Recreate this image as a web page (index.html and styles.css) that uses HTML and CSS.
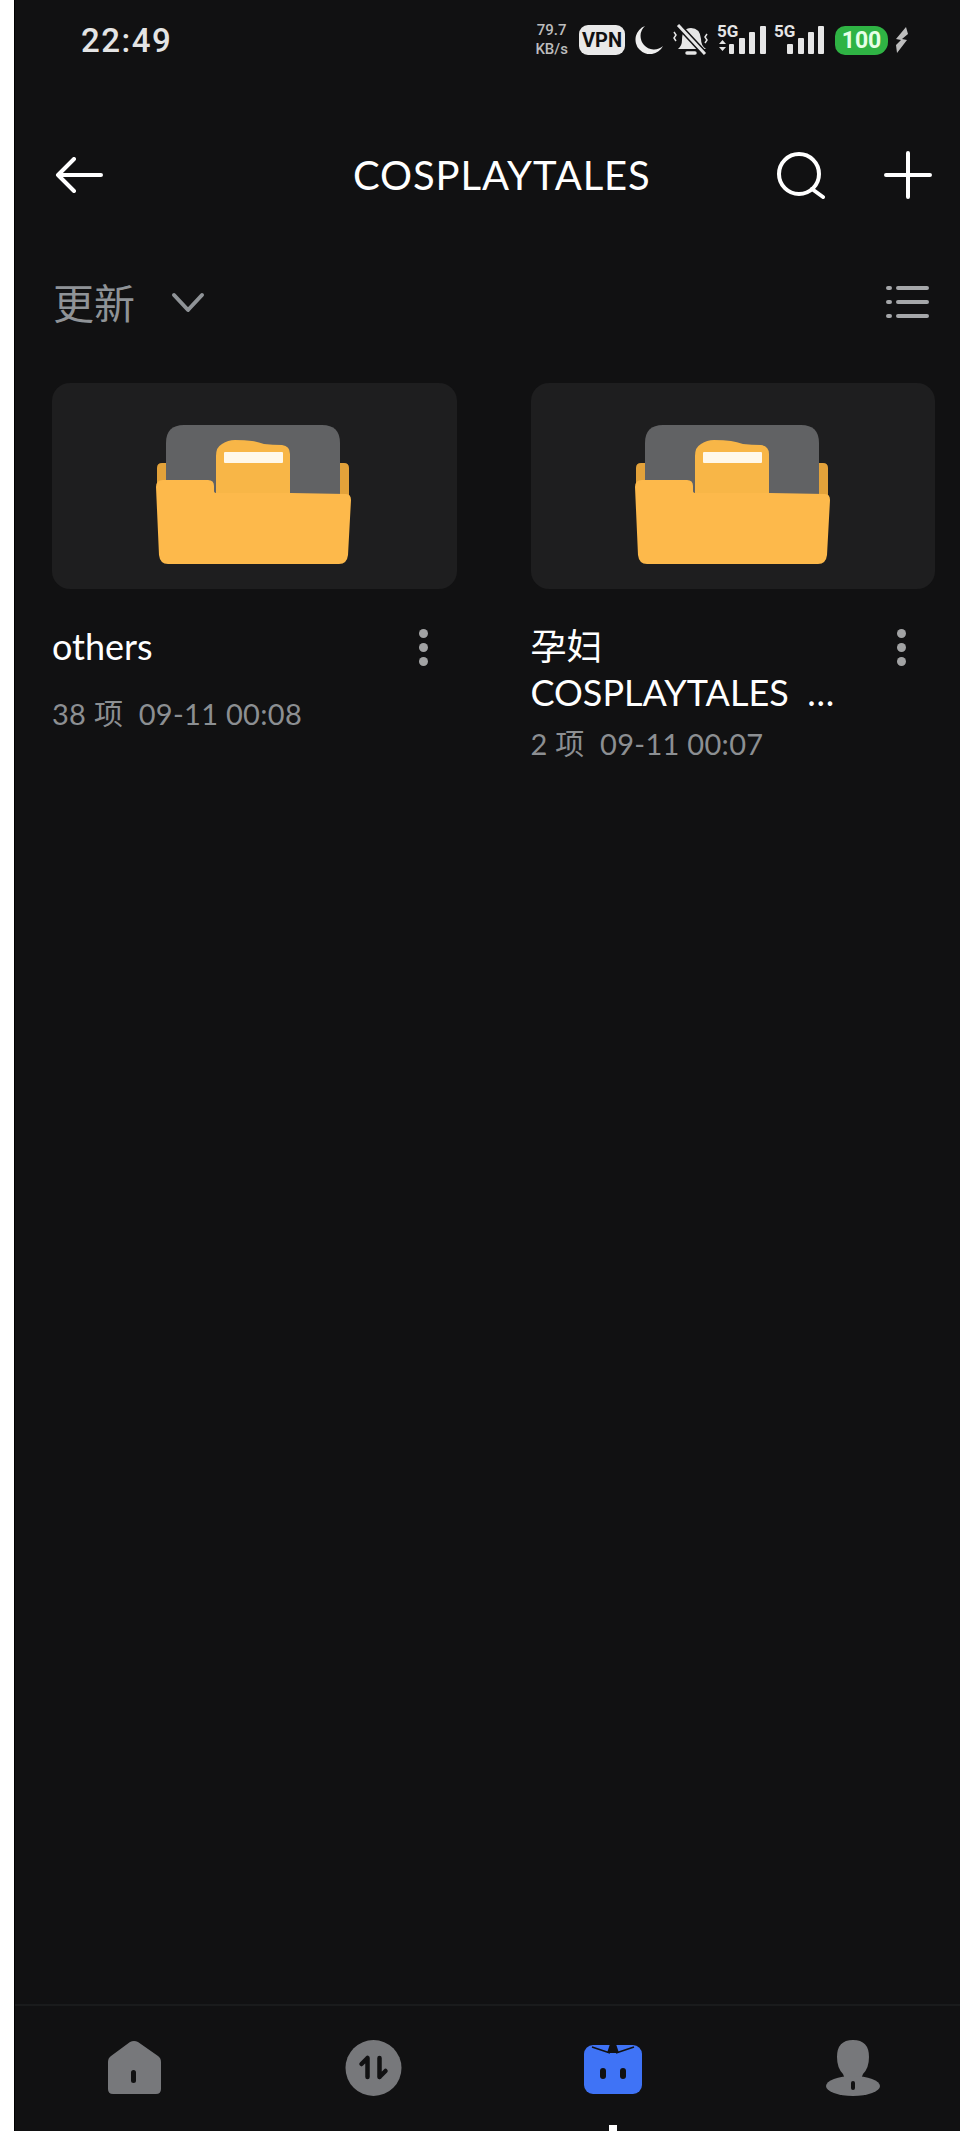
FILE: index.html
```html
<!DOCTYPE html>
<html lang="zh-CN">

<head>
    <meta charset="UTF-8">
    <meta name="viewport" content="width=device-width, initial-scale=1.0">
    <title>COSPLAYTALES</title>
    <link rel="stylesheet" href="styles.css">
</head>

<body>

    <!-- Shared folder drawing -->
    <svg class="defs" width="0" height="0" aria-hidden="true">
        <symbol id="folder" viewBox="0 0 210 150">
            <path d="M13 43h8v30H8V48q0-5 5-5zM186 43h9q5 0 5 5v30h-14z" fill="#e3a23a" />
            <path d="M35 5h138q18 0 18 18v72H17V23q0-18 18-18z" fill="#616264" />
            <path d="M67 80V36q0-9 6-12 6-4 13-4 10 0 17 1 6 1 12 3 9 1 18 1 8 1 8 9v46z" fill="#f8b647" />
            <rect x="75" y="32" width="59" height="11" rx="1" fill="#fff8ea" />
            <path d="M14 60h45q6 0 6 6v5q0 2 3 2h74l55 1q5 0 5 6l-3 55q-1 9-9 9H19q-8 0-9-9L7 67q0-7 7-7z" fill="#fdb94b" />
        </symbol>
    </svg>

    <div class="phone">

        <!-- Status Bar -->
        <div class="status-bar">
            <span class="clock">22:49</span>
            <div class="status-icons">
                <div class="speed">
                    <p>79.7</p>
                    <p>KB/s</p>
                </div>
                <div class="vpn">VPN</div>
                <svg width="30" height="30" viewBox="0 0 30 30">
                    <path d="M12 1A14.500 14.500 0 1 0 30 21 13 13 0 0 1 12 1z" fill="#eee" />
                </svg>
                <svg width="38" height="32" viewBox="0 0 38 32" fill="none" stroke="#e6e6e6">
                    <path d="M7 25q4-3 4-9 0-12 9-12 9 0 10 11 0 7 5 10z" fill="#e6e6e6" stroke="none" />
                    <path d="M16 29h8" stroke-width="3.500" stroke-linecap="round" />
                    <path d="M7 1l27 29" stroke="#111112" stroke-width="6" />
                    <path d="M7 1l27 29" stroke-width="3" />
                    <path d="M3 8l2 3-2 3 2 3M36 10l-2 3 2 3-2 3" stroke-width="1.500" />
                </svg>
                <svg class="signal" width="49" height="38" viewBox="0 -6 49 38" fill="#e6e6e6">
                    <text x="0" y="13" class="net-label">5G</text>
                    <path d="M2 20l3.500-4 3.500 4zM2 23l3.500 4 3.500-4z" />
                    <rect x="12" y="20" width="5" height="10" rx="1" />
                    <rect x="22" y="14" width="6" height="16" rx="1" />
                    <rect x="32" y="8" width="6" height="22" rx="1" />
                    <rect x="43" y="2" width="6" height="28" rx="1" />
                </svg>
                <svg class="signal" width="50" height="38" viewBox="0 -6 50 38" fill="#e6e6e6">
                    <text x="0" y="13" class="net-label">5G</text>
                    <rect x="13" y="20" width="6" height="10" rx="1" />
                    <rect x="24" y="14" width="6" height="16" rx="1" />
                    <rect x="34" y="8" width="6" height="22" rx="1" />
                    <rect x="44" y="2" width="6" height="28" rx="1" />
                </svg>
                <span class="battery">100</span>
                <svg class="bolt" width="14" height="26" viewBox="0 0 14 26">
                    <path d="M11 0L1 12l5 1-5 5 1 8 10-13-5-1 6-5z" fill="#bdbdbd" />
                </svg>
            </div>
        </div>

        <!-- Top Bar -->
        <div class="top-bar">
            <svg width="48" height="36" viewBox="0 0 48 36" fill="none" stroke="#fff" stroke-width="4" stroke-linecap="round" stroke-linejoin="round">
                <path d="M19 2L3 18l16 16M3 18h43" />
            </svg>
            <h1>COSPLAYTALES</h1>
            <div class="top-actions">
                <svg width="50" height="48" viewBox="0 0 50 48" fill="none" stroke="#fff" stroke-width="4" stroke-linecap="round">
                    <circle cx="23" cy="23" r="20" />
                    <path d="M36 38l11 8" />
                </svg>
                <svg width="48" height="48" viewBox="0 0 48 48" fill="none" stroke="#fff" stroke-width="4" stroke-linecap="round">
                    <path d="M24 2v44M2 24h44" />
                </svg>
            </div>
        </div>

        <!-- Sort Row -->
        <div class="sort-row">
            <div class="sort-label">
                <span>更新</span>
                <svg width="34" height="22" viewBox="0 0 34 22" fill="none" stroke="#8f9397" stroke-width="4" stroke-linecap="round" stroke-linejoin="round">
                    <path d="M3 3l14 15L31 3" />
                </svg>
            </div>
            <svg width="46" height="36" viewBox="0 0 46 36" fill="none" stroke="#a5a7a9" stroke-width="4" stroke-linecap="round">
                <path d="M5 3h2M5 17h2M5 31h2M15 3h29M15 17h29M15 31h29" />
            </svg>
        </div>

        <!-- Folder Grid -->
        <div class="folder-grid">
            <div class="folder-item">
                <div class="thumb">
                    <svg width="210" height="150"><use href="#folder" /></svg>
                </div>
                <div class="item-row">
                    <div class="item-name">others</div>
                    <div class="dots"><i></i><i></i><i></i></div>
                </div>
                <div class="item-meta">38 项&nbsp; 09-11 00:08</div>
            </div>
            <div class="folder-item">
                <div class="thumb">
                    <svg width="210" height="150"><use href="#folder" /></svg>
                </div>
                <div class="item-row">
                    <div class="item-name">孕妇<br>COSPLAYTALES&nbsp;&nbsp;…</div>
                    <div class="dots"><i></i><i></i><i></i></div>
                </div>
                <div class="item-meta item-meta-tight">2 项&nbsp; 09-11 00:07</div>
            </div>
        </div>

        <!-- Bottom Nav -->
        <div class="bottom-nav">
            <svg width="60" height="58" viewBox="0 0 60 58">
                <path d="M30 1q2 0 4 1l20 14q3 2 3 6v27q0 5-5 5H9q-5 0-5-5V22q0-4 3-6L26 2q2-1 4-1z" fill="#77787b" />
                <rect x="27" y="30" width="5" height="13" rx="2.500" fill="#111112" />
            </svg>
            <svg width="60" height="58" viewBox="0 0 60 58">
                <circle cx="29.500" cy="28" r="28" fill="#77787b" />
                <path d="M23.500 18v19M17.500 24l6-6M35.500 18v19M35.500 37l6-6" fill="none" stroke="#111112" stroke-width="4.500" stroke-linecap="round" />
            </svg>
            <svg width="60" height="58" viewBox="0 0 60 58">
                <rect x="0" y="5" width="58" height="49" rx="9" fill="#3f73f6" />
                <path d="M26 4h6l3 9h-12z" fill="#111112" />
                <path d="M26 13L8 7M32 13l18-6" fill="none" stroke="#111112" stroke-width="1.500" />
                <rect x="16" y="28" width="6" height="11" rx="3" fill="#111112" />
                <rect x="36" y="28" width="6" height="11" rx="3" fill="#111112" />
            </svg>
            <svg width="60" height="58" viewBox="0 0 60 58">
                <path d="M29 0q16 0 16 17 0 11-6 17l-2 5H21l-2-5q-6-6-6-17 0-17 16-17z" fill="#77787b" />
                <ellipse cx="29" cy="46" rx="27" ry="10" fill="#77787b" />
                <rect x="27" y="41" width="4" height="9" rx="2" fill="#111112" />
            </svg>
            <span class="home-mark"></span>
        </div>

    </div>

</body>

</html>
```

FILE: styles.css
```css
/* Basic reset */
* {
    margin: 0;
    padding: 0;
    box-sizing: border-box;
}

body {
    background-color: #fff;
    font-family: Lato, "Noto Sans CJK SC", sans-serif;
    height: 2131px;
    overflow: hidden;
    padding-left: 14px;
}

.defs {
    position: absolute;
}

.phone {
    display: flex;
    flex-direction: column;
    height: 2131px;
    background-color: #111112;
    border-left: 1px solid #000;
    color: #fff;
}

/* Status Bar */
.status-bar {
    display: flex;
    justify-content: space-between;
    align-items: center;
    height: 80px;
    padding: 0 51px 0 66px;
}

.clock {
    font-family: Roboto, sans-serif;
    font-size: 33px;
    font-weight: 500;
    letter-spacing: 1.5px;
    color: #e4e4e4;
}

.status-icons {
    display: flex;
    align-items: center;
    gap: 8px;
}

.speed {
    margin-right: 3px;
    font-family: Roboto, sans-serif;
    font-size: 15px;
    font-weight: 500;
    line-height: 19px;
    text-align: center;
    color: #bdbdbd;
}

.vpn {
    padding: 0 3px;
    height: 30px;
    line-height: 30px;
    border-radius: 9px;
    background-color: #e9e9e9;
    color: #111112;
    font-family: Roboto, sans-serif;
    font-size: 20px;
    font-weight: 700;
}

.signal {
    margin-bottom: 6px;
}

.net-label {
    font-family: Roboto, sans-serif;
    font-size: 17px;
    font-weight: 700;
}

.battery {
    width: 53px;
    height: 29px;
    line-height: 29px;
    margin-left: 3px;
    border-radius: 10px 13px 13px 10px;
    background-color: #2fb344;
    color: #e6ffe6;
    font-family: Roboto, sans-serif;
    font-size: 23px;
    font-weight: 700;
    text-align: center;
}

.bolt {
    margin-left: -1px;
}

/* Top Bar */
.top-bar {
    position: relative;
    display: flex;
    justify-content: space-between;
    align-items: center;
    height: 190px;
    padding: 0 28px 0 40px;
}

.top-bar h1 {
    position: absolute;
    left: 338px;
    font-size: 40px;
    font-weight: 400;
    letter-spacing: 0.9px;
}

.top-actions {
    display: flex;
    align-items: center;
    gap: 58px;
}

/* Sort Row */
.sort-row {
    display: flex;
    justify-content: space-between;
    align-items: center;
    height: 66px;
    padding: 0 31px 0 38px;
}

.sort-label {
    display: flex;
    align-items: center;
    gap: 36px;
    color: #8f9397;
    font-size: 41px;
}

.sort-label span {
    margin-bottom: 5px;
}

/* Folder Grid */
.folder-grid {
    flex: 1;
    display: grid;
    grid-template-columns: 1fr 1fr;
    align-items: start;
    column-gap: 74px;
    padding: 47px 25px 0 37px;
}

.thumb {
    display: flex;
    justify-content: center;
    height: 206px;
    padding-top: 37px;
    border-radius: 18px;
    background-color: #1e1e1f;
}

.item-row {
    display: flex;
    justify-content: space-between;
    align-items: flex-start;
    margin-top: 34px;
}

.item-name {
    font-size: 36px;
    line-height: 46px;
}

.dots {
    display: flex;
    flex-direction: column;
    gap: 5px;
    margin: 6px 29px 0 0;
}

.dots i {
    width: 9px;
    height: 9px;
    border-radius: 50%;
    background-color: #a2a3a4;
}

.item-meta {
    margin-top: 26px;
    font-size: 29px;
    letter-spacing: 0.3px;
    line-height: 38px;
    color: #8c8f92;
}

.item-meta-tight {
    margin-top: 10px;
}

/* Bottom Nav */
.bottom-nav {
    position: relative;
    display: flex;
    gap: 180px;
    height: 127px;
    padding: 34px 0 0 89px;
    border-top: 2px solid #1a1b1c;
}

.home-mark {
    position: absolute;
    left: 594px;
    bottom: 0;
    width: 8px;
    height: 6px;
    background-color: #fff;
}
```
